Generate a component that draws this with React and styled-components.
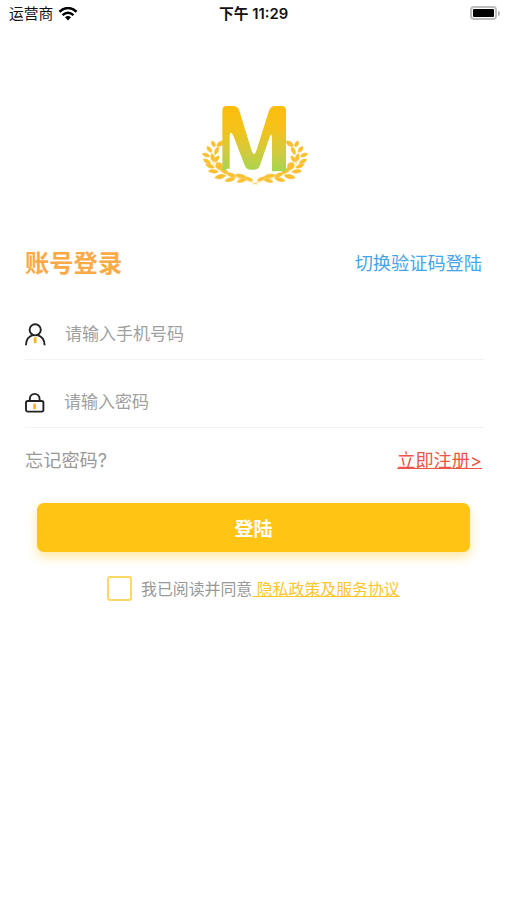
import React, { useState } from "react";
import styled, { createGlobalStyle } from "styled-components";

// one half of the wreath: [cx, cy, length, thickness, angle]
const leaves = [
  [70, 147, 10, 5, 62],
  [91, 146, 13, 6, -34],
  [58, 163, 11, 5, 52],
  [80, 167, 13, 5, -66],
  [48, 180, 12, 5, 22],
  [68, 187, 12, 5, 75],
  [51, 199, 13, 5, 28],
  [80, 192, 12, 5, -55],
  [60, 213, 14, 5, 22],
  [88, 213, 13, 9, 50],
  [70, 229, 15, 5, 4],
  [103, 228, 15, 5, 30],
  [91, 245, 17, 6, -12],
  [124, 240, 14, 5, 22],
  [120, 254, 16, 5, -14],
  [152, 243, 18, 5, 12],
  [156, 256, 16, 5, -18],
  [177, 252, 13, 4, 24],
];

function Wreath() {
  return (
    <>
      <path d="M62 190 Q80 232 130 246 Q170 252 202 268" fill="none" stroke="#f9c848" strokeWidth="2" />
      {leaves.map(([x, y, rx, ry, angle]) => (
        <path
          key={`${x}-${y}`}
          d={`M${-rx} 0 C${-rx / 2} ${-ry * 1.45} ${rx / 2} ${-ry * 1.45} ${rx} 0 C${rx / 2} ${ry * 1.45} ${-rx / 2} ${ry * 1.45} ${-rx} 0Z`}
          transform={`translate(${x} ${y}) rotate(${angle})`}
          fill="#f9c030"
          stroke="#f9c030"
          strokeWidth="1.2"
        />
      ))}
    </>
  );
}

function Logo() {
  return (
    <LogoSvg viewBox="30 15 330 270">
      <defs>
        <linearGradient id="letter" x1="0" y1="0" x2="0" y2="1">
          <stop offset="0" stopColor="#fdbd0c" />
          <stop offset="0.35" stopColor="#f5c21a" />
          <stop offset="0.7" stopColor="#d2cb3c" />
          <stop offset="1" stopColor="#a5d650" />
        </linearGradient>
      </defs>
      <Wreath />
      <g transform="translate(390 0) scale(-1 1)">
        <Wreath />
      </g>
      <path
        d="M97 226 V46 Q97 33 110 33 H129 Q143 33 148 47 L186 170 Q192 184 198 170 L237 47 Q242 33 256 33 H274 Q288 33 288 46 V229 H246 V128 Q245 110 239 126 L210 211 Q205 224 194 224 H180 Q169 224 164 211 L129 120 Q121 106 119 120 V222 Q112 218 106 226 Z"
        fill="url(#letter)"
      />
    </LogoSvg>
  );
}

function WifiIcon() {
  return (
    <svg width="20" height="15" viewBox="0 0 20 15">
      <g fill="none" stroke="#000" strokeWidth="2.5">
        <path d="M1.4 4.7 Q10 -2.6 18.6 4.7" />
        <path d="M4.5 8.1 Q10 3.5 15.5 8.1" />
      </g>
      <path d="M7 10.3 Q10 7.7 13 10.3 L10 13.4Z" />
    </svg>
  );
}

function UserIcon() {
  return (
    <svg width="22" height="24" viewBox="0 0 22 24" fill="none">
      <circle cx="10.2" cy="6.8" r="5.6" stroke="#222" strokeWidth="1.9" />
      <path d="M1 22.3 C1 16.6 4.2 13.2 8 12.2 M12.4 12.2 C16.2 13.2 19.6 16.6 19.6 22.3" stroke="#222" strokeWidth="1.9" />
      <rect x="8.8" y="14.3" width="2.8" height="6" rx="1.2" fill="#fdb515" />
    </svg>
  );
}

function LockIcon() {
  return (
    <svg width="22" height="24" viewBox="0 0 22 24" fill="none">
      <path d="M4.8 10 V8 C4.8 1.2 14.6 1.2 14.6 8 V10" stroke="#222" strokeWidth="1.9" />
      <rect x="1" y="10" width="17.4" height="10.6" rx="1.8" stroke="#222" strokeWidth="1.9" />
      <rect x="8.2" y="12.6" width="2.8" height="5.6" rx="1.2" fill="#fdb515" />
    </svg>
  );
}

function App() {
  const [phone, setPhone] = useState("");
  const [password, setPassword] = useState("");
  const [agreed, setAgreed] = useState(false);

  return (
    <Screen>
      <GlobalStyle />
      <StatusBar>
        <Carrier>
          运营商
          <WifiIcon />
        </Carrier>
        <Time>下午 11:29</Time>
        <Power>
          <Battery />
          <BatteryTip />
        </Power>
      </StatusBar>

      <Logo />

      <Heading>
        <Title>账号登录</Title>
        <SwitchLink>切换验证码登陆</SwitchLink>
      </Heading>

      <Field>
        <UserIcon />
        <Input placeholder="请输入手机号码" value={phone} onChange={(e) => setPhone(e.target.value)} />
      </Field>
      <Field $gap={17}>
        <LockIcon />
        <Input
          type="password"
          placeholder="请输入密码"
          value={password}
          onChange={(e) => setPassword(e.target.value)}
        />
      </Field>

      <Links>
        <Forgot>忘记密码?</Forgot>
        <Register>立即注册&gt;</Register>
      </Links>

      <LoginButton>登陆</LoginButton>

      <Agreement>
        <Checkbox $checked={agreed} onClick={() => setAgreed(!agreed)} />
        <span>我已阅读并同意</span>
        <Policy>&nbsp;隐私政策及服务协议</Policy>
      </Agreement>
    </Screen>
  );
}

const GlobalStyle = createGlobalStyle`
  body {
    margin: 0;
    background: #fff;
  }

  * {
    box-sizing: border-box;
  }

  body, input, button {
    font-family: Inter, "Noto Sans CJK SC", sans-serif;
  }
`;

const Screen = styled.div`
  height: 900px;
  overflow: hidden;
  display: flex;
  flex-direction: column;
  background: #fff;
`;

const StatusBar = styled.div`
  height: 28px;
  display: grid;
  grid-template-columns: 1fr auto 1fr;
  align-items: center;
  padding: 0 7px 0 9px;
  color: #111;
`;

const Carrier = styled.div`
  display: flex;
  align-items: center;
  gap: 5px;
  font-size: 14.8px;
  line-height: 28px;
`;

const Time = styled.div`
  margin-right: 2px;
  font-size: 14.8px;
  font-weight: 600;
  line-height: 28px;
`;

const Power = styled.div`
  display: flex;
  align-items: center;
  justify-content: flex-end;
  gap: 1px;
  padding-bottom: 2px;
`;

const Battery = styled.div`
  width: 27px;
  height: 14px;
  border: 2px solid #bdbdbd;
  border-radius: 4px;
  background: #000;
  background-clip: content-box;
  padding: 1px;
`;

const BatteryTip = styled.div`
  width: 2px;
  height: 5px;
  border-radius: 0 2px 2px 0;
  background: #b5b5b5;
`;

const LogoSvg = styled.svg`
  width: 110px;
  height: 90px;
  margin: 72px 0 0 200px;
  flex-shrink: 0;
`;

const Heading = styled.div`
  display: flex;
  align-items: center;
  justify-content: space-between;
  height: 36px;
  margin: 54px 25px 0;
`;

const Title = styled.h1`
  margin: 0;
  padding-bottom: 1px;
  font-size: 24.3px;
  font-weight: 700;
  color: #fcaa48;
`;

const SwitchLink = styled.a`
  font-size: 18.2px;
  color: #48a5ea;
`;

const Field = styled.label`
  display: flex;
  align-items: center;
  gap: ${(props) => props.$gap || 18}px;
  height: 50px;
  margin: 30px 23px 0 25px;
  border-bottom: 1px solid #f2f2f2;

  & + & {
    margin-top: 18px;
  }
`;

const Input = styled.input`
  flex: 1;
  min-width: 0;
  padding: 0 0 2px;
  border: none;
  outline: none;
  background: none;
  font-size: 17px;
  color: #333;

  &::placeholder {
    color: #a0a0a0;
  }
`;

const Links = styled.div`
  display: flex;
  align-items: center;
  justify-content: space-between;
  height: 30px;
  margin: 16px 25px 0;
  font-size: 18.2px;
`;

const Forgot = styled.a`
  color: #999;
`;

const Register = styled.a`
  color: #ee5548;
  text-decoration: underline;
`;

const LoginButton = styled.button`
  height: 49px;
  margin: 29px 37px 0;
  border: none;
  border-radius: 7px;
  background: #ffc414;
  box-shadow: 0 5px 11px rgba(255, 196, 20, 0.4);
  font-size: 19px;
  font-weight: 700;
  color: #fff;
`;

const Agreement = styled.div`
  display: flex;
  align-items: center;
  height: 26px;
  margin: 23px 0 0 107px;
  font-size: 15.9px;
  color: #999;
`;

const Checkbox = styled.button`
  width: 25px;
  height: 25px;
  margin: 1px 9px 0 0;
  padding: 0;
  border: 2px solid #fcd666;
  border-radius: 3px;
  background: ${(props) => (props.$checked ? "#ffc414" : "#fff")};
`;

const Policy = styled.a`
  color: #fcc62c;
  text-decoration: underline;
`;

export default App;
